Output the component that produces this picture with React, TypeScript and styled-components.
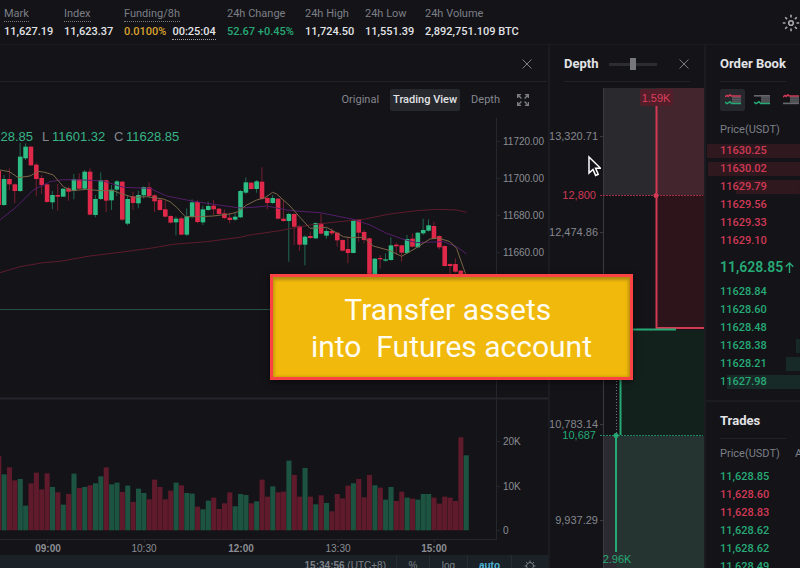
import React from 'react';
import styled, { createGlobalStyle, css } from 'styled-components';

const c = {
  bg: '#131318',
  line: '#222329',
  raised: '#26282d',
  text: '#e2e3e6',
  muted: '#7d7f86',
  green: '#27a976',
  red: '#d03a55',
  candleUp: '#2ebd85',
  candleDown: '#e0294a',
  gold: '#d9a22e',
};

const GlobalStyle = createGlobalStyle`
  * { box-sizing: border-box; }
  html, body { margin: 0; background: ${c.bg}; }
  body { overflow: hidden; font-family: Roboto, "Liberation Sans", sans-serif; font-size: 11px; line-height: 14px; color: ${c.text}; }
  button { font: inherit; color: inherit; border: 0; background: none; padding: 0; cursor: pointer; }
`;

const Page = styled.div`
  position: relative;
  height: 100vh;
  overflow: hidden;
  display: flex;
  flex-direction: column;
`;

const TopBar = styled.header`
  display: flex;
  justify-content: space-between;
  align-items: center;
  height: 45px;
  flex: none;
  padding: 2px 0 0 4px;
  border-bottom: 1px solid #1b1c21;
`;

const Stats = styled.dl`
  display: grid;
  grid-template-columns: 60px 60px 103px 78px 60px 60px auto;
  margin: 0;
`;

const Stat = styled.div`
  display: flex;
  flex-direction: column;
  align-items: flex-start;
  gap: 3px;
  white-space: nowrap;
`;

const StatLabel = styled.dt<{ $hint?: boolean }>`
  color: ${c.muted};
  height: 15px;
  ${(p) => p.$hint && css`border-bottom: 1px dotted #77797f;`}
`;

const StatValue = styled.dd<{ $color?: string }>`
  margin: 0;
  display: flex;
  gap: 6px;
  font-weight: 500;
  color: ${(p) => p.$color ?? c.text};
`;

const Countdown = styled.span`
  color: ${c.text};
  border-bottom: 1px dotted #a0a2a8;
`;

const IconButton = styled.button`
  display: flex;
  align-items: center;
  justify-content: center;
  flex: none;
  color: #7b7d83;
`;

const Main = styled.main`
  display: grid;
  grid-template-columns: minmax(0, 1fr) 156px 96px;
  flex: 1;
  min-height: 0;
`;

const Panel = styled.section`
  min-width: 0;
  display: flex;
  flex-direction: column;
  overflow: hidden;
  & + & { border-left: 2px solid #1b1c21; }
`;

const PanelHead = styled.div<{ $inset?: boolean }>`
  display: flex;
  align-items: center;
  flex: none;
  height: 37px;
  padding-top: 2px;
  margin: ${(p) => (p.$inset ? '0 14px' : '0')};
  border-bottom: 1px solid ${c.line};
`;

const Title = styled.h2`
  margin: 0;
  font-size: 13px;
  line-height: 16px;
  font-weight: 700;
  white-space: nowrap;
`;

const ChartHead = styled(PanelHead)`
  justify-content: flex-end;
  padding-right: 15px;
  margin-right: 1px;
`;

const ViewBar = styled.div`
  display: flex;
  align-items: center;
  justify-content: flex-end;
  flex: none;
  height: 35px;
  gap: 11px;
  padding-right: 19px;
`;

const ViewButton = styled.button<{ $active?: boolean }>`
  height: 22px;
  color: #85878d;
  ${(p) => p.$active && css`
    padding: 0 3px;
    border-radius: 2px;
    background: ${c.raised};
    color: ${c.text};
    font-weight: 500;
  `}
`;

const ExpandButton = styled(IconButton)`
  margin-left: 6px;
`;

const Plot = styled.div`
  display: flex;
  justify-content: flex-end;
  flex: none;
  overflow: hidden;
  svg { flex: none; display: block; font-family: "Liberation Sans", Arial, sans-serif; }
`;

const StatusBar = styled.div`
  display: flex;
  align-items: center;
  justify-content: flex-end;
  flex: none;
  height: 22px;
  background: #1a2127;
  color: #7d8086;
  font-family: "Liberation Sans", Arial, sans-serif;
  font-size: 10px;
`;

const StatusItem = styled.button<{ $width: number; $active?: boolean }>`
  display: flex;
  align-items: center;
  justify-content: center;
  width: ${(p) => p.$width}px;
  height: 22px;
  border-left: 1px solid #262d33;
  white-space: pre;
  font-weight: ${(p) => (p.$active ? 700 : 400)};
  color: ${(p) => (p.$active ? '#4fb5d6' : 'inherit')};
`;

const Clock = styled.time`
  padding-right: 10px;
`;

const Range = styled.input`
  appearance: none;
  width: 48px;
  height: 12px;
  margin: 0 auto 0 11px;
  background: linear-gradient(#2b2d32, #2b2d32) center / 100% 3px no-repeat;
  &::-webkit-slider-thumb {
    appearance: none;
    width: 6px;
    height: 12px;
    background: #76787e;
  }
`;

const CloseDepth = styled(IconButton)`
  margin-right: 1px;
`;

const ModeBar = styled.div`
  display: flex;
  align-items: center;
  gap: 4px;
  flex: none;
  height: 35px;
  padding-left: 14px;
  overflow: hidden;
`;

const ModeButton = styled(IconButton)<{ $active?: boolean }>`
  width: 25px;
  height: 22px;
  border-radius: 2px;
  background: ${(p) => (p.$active ? c.raised : 'transparent')};
`;

const Book = styled.table`
  width: 100%;
  flex: none;
  border-collapse: collapse;
  table-layout: fixed;
`;

const HeadCell = styled.th<{ $first?: boolean; $height: number }>`
  width: ${(p) => (p.$first ? '89px' : 'auto')};
  height: ${(p) => p.$height}px;
  padding: 0 0 0 ${(p) => (p.$first ? 14 : 0)}px;
  text-align: left;
  white-space: nowrap;
  font-weight: 400;
  color: ${c.muted};
`;

const PriceCell = styled.td<{ $up: boolean; $fill?: number }>`
  height: 18px;
  padding: 0 0 0 14px;
  font-weight: 500;
  color: ${(p) => (p.$up ? c.green : c.red)};
  background: linear-gradient(${(p) => (p.$up ? '#182a28, #182a28' : '#30181f, #30181f')}) right center /
    ${(p) => p.$fill ?? 0}% 14px no-repeat;
`;

const LastPrice = styled.td`
  height: 33px;
  padding: 0 0 0 14px;
  font-size: 14px;
  font-weight: 600;
  color: ${c.green};
  white-space: nowrap;
  svg { margin-left: 2px; vertical-align: -1px; }
`;

const TradesPanel = styled.div`
  flex: none;
  margin-top: 9px;
  border-top: 2px solid #1b1c21;
`;

const Callout = styled.aside`
  position: absolute;
  left: 270px;
  top: 274px;
  width: 363px;
  padding: 14px 0 12px;
  border: 3px solid #fc4343;
  background: #f0b90b;
  box-shadow: inset 0 3px 3px #b58c12, inset -2px 0 3px #c59a10, inset 2px 0 3px #d5a50e, 0 2px 6px rgba(0, 0, 0, 0.5);
  color: #fffdf2;
  text-align: center;
  white-space: pre;
  font-size: 30px;
  line-height: 37px;
`;

const Pointer = styled.svg`
  position: absolute;
  left: 587px;
  top: 155px;
`;

type Candle = [number, number, number, number, number];

/* up flag, body top, body bottom, wick top, wick bottom (thirds of a pixel) */
const candles: Candle[] = [
  [0, 153, 255, 153, 255], [1, 177, 255, 165, 258], [0, 177, 193, 145, 210], [0, 193, 213, 190, 250],
  [1, 110, 213, 68, 216], [1, 80, 115, 70, 120], [0, 80, 136, 78, 138], [0, 134, 177, 128, 228],
  [0, 174, 195, 165, 222], [0, 193, 246, 193, 248], [1, 225, 247, 213, 268], [0, 225, 230, 192, 272],
  [1, 206, 230, 206, 230], [0, 205, 215, 200, 242], [1, 177, 213, 162, 238], [0, 178, 206, 160, 208],
  [1, 155, 206, 150, 208], [0, 155, 284, 145, 286], [1, 237, 285, 225, 292], [1, 180, 237, 157, 240],
  [0, 181, 242, 178, 276], [1, 209, 241, 195, 270], [1, 184, 209, 180, 228], [0, 185, 299, 183, 302],
  [1, 237, 311, 225, 316], [0, 229, 249, 215, 270], [1, 225, 250, 212, 265], [1, 201, 226, 199, 236],
  [0, 202, 228, 187, 232], [0, 226, 244, 222, 276], [0, 239, 270, 238, 272], [0, 268, 290, 243, 292],
  [0, 288, 308, 286, 310], [1, 296, 307, 290, 346], [0, 295, 344, 290, 346], [1, 289, 344, 265, 348],
  [1, 247, 291, 238, 295], [0, 246, 306, 240, 310], [1, 268, 307, 257, 315], [1, 258, 270, 245, 272],
  [0, 257, 268, 240, 285], [0, 266, 282, 264, 284], [0, 280, 294, 268, 298], [0, 293, 300, 278, 310],
  [1, 290, 299, 278, 302], [1, 213, 292, 210, 294], [1, 187, 218, 172, 222], [0, 188, 207, 186, 209],
  [1, 184, 207, 180, 218], [0, 185, 237, 142, 240], [0, 234, 249, 230, 268], [1, 234, 249, 225, 252],
  [0, 236, 296, 234, 298], [0, 296, 303, 240, 306], [1, 282, 303, 278, 425], [0, 282, 320, 280, 375],
  [0, 318, 374, 315, 392], [1, 350, 374, 346, 436], [0, 348, 354, 335, 356], [1, 309, 355, 307, 357],
  [0, 309, 341, 282, 343], [1, 333, 347, 325, 356], [0, 333, 340, 325, 345], [0, 338, 361, 335, 380],
  [0, 360, 392, 358, 394], [0, 387, 399, 350, 430], [1, 300, 399, 298, 400], [0, 299, 338, 297, 365],
  [0, 336, 360, 330, 370], [0, 355, 480, 353, 482], [1, 416, 480, 414, 482], [0, 414, 418, 405, 446],
  [1, 418, 422, 400, 425], [1, 376, 420, 352, 422], [0, 374, 379, 368, 405], [0, 376, 398, 374, 425],
  [1, 357, 399, 345, 402], [0, 356, 380, 340, 382], [1, 338, 382, 336, 384], [1, 330, 340, 296, 345],
  [1, 316, 332, 298, 335], [0, 318, 356, 305, 358], [0, 348, 382, 346, 388], [0, 378, 438, 376, 440],
  [0, 432, 438, 430, 462], [0, 432, 455, 415, 458], [0, 452, 480, 450, 482],
];

/* bar heights in thirds of a pixel; negative values are down bars */
const volumes = [
  -223, 168, -189, -150, 154, 74, -141, -173, -123, -171, 130, -114, 77, -109, 170, -127, 130, -135, 141, 162,
  -189, 138, 143, -115, 134, -85, 125, 112, -93, -152, -130, -93, -119, 143, -135, 112, 110, -71, 63, 89,
  -98, -64, -81, -114, 72, 109, 106, -81, 87, -152, -101, 132, -114, -116, 209, -166, -101, 187, -101, 78,
  -105, 82, -57, -109, -96, -134, 141, -154, -99, -166, 135, -128, 92, 130, -88, -116, 98, -95, 92, 109,
  109, -98, -80, -101, -98, -88, -279, 225,
];

const shortAverage =
  '0,150 28,155 55,173 90,168 115,154 135,157 160,165 190,200 215,212 260,208 300,212 340,212 360,220 400,232 440,230 490,237 510,245 530,262 556,290 600,290 640,288 690,282 712,276 740,255 770,240 795,233 818,217 830,222 870,258 900,292 930,325 980,322 1030,350 1050,353 1090,352 1120,378 1170,392 1205,409 1250,383 1290,357 1315,354 1350,365 1370,385 1382,420 1397,462 1402,480';
const midAverage =
  '0,300 50,260 100,210 150,185 190,179 250,180 310,183 370,202 450,205 500,228 560,240 620,250 720,264 760,262 800,258 860,270 900,274 960,278 1020,290 1060,298 1110,315 1160,340 1210,358 1250,368 1300,366 1330,365 1370,380 1400,402';
const longAverage =
  '0,458 60,440 130,428 180,424 270,408 360,397 450,385 520,373 620,365 720,352 750,345 840,332 890,322 930,315 990,308 1090,298 1170,282 1250,272 1310,268 1370,270 1400,277';

const barX = (i: number) => (12 + 16.12 * (i - 1)) / 3;

function PriceChart() {
  return (
    <svg width="548" height="438" viewBox="0 117 548 438" fontSize="10" fill="#8b8d93" aria-label="Price and volume chart">
      <g stroke="#26272d">
        <path d="M0 398.5H548" strokeWidth="2" />
        <path d="M496.5 118V539M0 539.5H497M47.5 539v3M144.5 539v3M241.5 539v3M338.5 539v3M434.5 539v3" />
        <path d="M497 141.5h3M497 178.5h3M497 215.5h3M497 252.5h3M497 441.5h3M497 486.5h3M497 530.5h3" />
      </g>
      <path d="M0 309.5H497" stroke="#285344" />
      {candles.map(([up, top, bottom, high, low], i) => (
        <g key={i} fill={up ? c.candleUp : c.candleDown}>
          <rect x={barX(i) - 0.5} y={120 + high / 3} width="1" height={(low - high) / 3} opacity="0.5" />
          <rect x={barX(i) - 2.2} y={120 + top / 3} width="4.6" height={(bottom - top) / 3} />
        </g>
      ))}
      <g transform="translate(0 120) scale(0.3333)" fill="none" strokeWidth="3">
        <polyline points={longAverage} stroke="#5e1b2b" />
        <polyline points={midAverage} stroke="#551d68" />
        <polyline points={shortAverage} stroke="#7b6546" />
      </g>
      {volumes.map((v, i) => (
        <rect
          key={i}
          x={barX(i) - 2.4}
          y={530.3 - Math.abs(v) / 3}
          width="5.1"
          height={Math.abs(v) / 3}
          fill={v > 0 ? '#1c5341' : '#5f1a2b'}
        />
      ))}
      <g fontSize="13" fill="#38b487">
        <text x="33" y="141" textAnchor="end">28.85</text>
        <text x="42" y="141" fill="#85878d">L</text>
        <text x="52" y="141">11601.32</text>
        <text x="114" y="141" fill="#85878d">C</text>
        <text x="126" y="141">11628.85</text>
      </g>
      <text x="503" y="145">11720.00</text>
      <text x="503" y="182">11700.00</text>
      <text x="503" y="219">11680.00</text>
      <text x="503" y="256">11660.00</text>
      <text x="503" y="445">20K</text>
      <text x="503" y="490">10K</text>
      <text x="503" y="534">0</text>
      <g textAnchor="middle">
        <text x="48" y="552" fontWeight="700">09:00</text>
        <text x="144" y="552">10:30</text>
        <text x="241" y="552" fontWeight="700">12:00</text>
        <text x="338" y="552">13:30</text>
        <text x="434" y="552" fontWeight="700">15:00</text>
      </g>
    </svg>
  );
}

function DepthChart() {
  return (
    <svg width="155" height="490" viewBox="549 82 155 490" fontSize="11" fill="#85878d" aria-label="Depth chart">
      <rect x="603" y="88" width="53" height="107" fill="#29292e" />
      <rect x="656" y="88" width="48" height="107" fill="#42252d" />
      <rect x="656" y="195" width="48" height="133" fill="#2d131a" />
      <rect x="620" y="330" width="84" height="105" fill="#13211d" />
      <rect x="603" y="436" width="13" height="136" fill="#2b2a30" />
      <rect x="616" y="436" width="88" height="136" fill="#263431" />
      <path d="M603.5 88V572M600 136.5h4M600 232.5h4M600 424.5h4M600 520.5h4" stroke="#3a3b41" />
      <path d="M600 195.5h103" stroke="#a03047" strokeDasharray="2 1" />
      <path d="M600 435.5h103" stroke="#1f8a62" strokeDasharray="2 1" />
      <path d="M616.5 330V434" stroke="#74767b" strokeDasharray="1 2" />
      <path d="M656.5 104V328H704" stroke={c.red} strokeWidth="2" fill="none" />
      <path d="M549 329.5H676" stroke={c.green} strokeWidth="2" />
      <path d="M620.5 330V435M616 435V552" stroke={c.green} strokeWidth="2" />
      <circle cx="656" cy="195.5" r="2.5" fill={c.red} />
      <circle cx="616" cy="435.5" r="2.5" fill={c.green} />
      <rect x="640" y="89" width="33" height="17" rx="2" fill="#521e2a" />
      <text x="656" y="102" fill="#dc3f5c" textAnchor="middle">1.59K</text>
      <text x="617" y="563" fill={c.green} textAnchor="middle">2.96K</text>
      <g textAnchor="end">
        <text x="598" y="140">13,320.71</text>
        <text x="596" y="199" fill={c.red}>12,800</text>
        <text x="598" y="236">12,474.86</text>
        <text x="598" y="428">10,783.14</text>
        <text x="596" y="439" fill={c.green}>10,687</text>
        <text x="598" y="524">9,937.29</text>
      </g>
    </svg>
  );
}

const CloseIcon = () => (
  <svg width="10" height="10" viewBox="0 0 10 10" fill="none" stroke="currentColor">
    <path d="M.5.5l9 9M9.5.5l-9 9" />
  </svg>
);

const ExpandIcon = () => (
  <svg width="12" height="12" viewBox="0 0 12 12" fill="none" stroke="currentColor" strokeWidth="1.4">
    <path d="M.6 4V.6H4M.6.6l3.8 3.8M8 .6h3.4V4M11.4.6L7.6 4.4M.6 8v3.4H4M.6 11.4l3.8-3.8M8 11.4h3.4V8M11.4 11.4L7.6 7.6" />
  </svg>
);

const SunIcon = () => (
  <svg width="18" height="18" viewBox="0 0 18 18" fill="none" stroke="#a9aaae" strokeWidth="1.6">
    <circle cx="9" cy="9" r="2.3" />
    <path d="M9 .8v2.7M9 14.5v2.7M.8 9h2.7M14.5 9h2.7M3.2 3.2l1.9 1.9M12.9 12.9l1.9 1.9M14.8 3.2l-1.9 1.9M5.1 12.9l-1.9 1.9" />
  </svg>
);

const GearIcon = () => (
  <svg width="12" height="12" viewBox="0 0 12 12" fill="none" stroke="currentColor">
    <circle cx="6" cy="6" r="3.5" />
    <path d="M6 .5v2M6 9.5v2M.5 6h2M9.5 6h2M2.1 2.1l1.4 1.4M8.5 8.5l1.4 1.4M9.9 2.1L8.5 3.5M3.5 8.5L2.1 9.9" />
  </svg>
);

function BookIcon({ asks, bids }: { asks?: boolean; bids?: boolean }) {
  return (
    <svg width="16" height="11" viewBox="0 0 16 11" fill="none">
      <path d="M7 2.4h9v6.4H7z" fill="#55575c" />
      <path d="M7 4.5h9M7 6.7h9" stroke="#3b3d42" strokeWidth=".6" />
      {asks ? (
        <path d="M0 3l2-1.6 1.2 1L5 .8 6.2 2H16" stroke={c.red} strokeWidth="1.5" />
      ) : (
        <path d="M0 1.8h16" stroke="#66686d" strokeWidth="1.6" />
      )}
      {bids ? (
        <path d="M0 8l2 1.6L5 7.8l1.6 1.8H16" stroke={c.green} strokeWidth="1.5" />
      ) : (
        <path d="M0 9.4h16" stroke="#66686d" strokeWidth="1.6" />
      )}
    </svg>
  );
}

const asks: [string, number][] = [
  ['11630.25', 99], ['11630.02', 98], ['11629.79', 68], ['11629.56', 0], ['11629.33', 0], ['11629.10', 0],
];
const bids: [string, number][] = [
  ['11628.84', 0], ['11628.60', 0], ['11628.48', 0], ['11628.38', 4], ['11628.21', 15], ['11627.98', 78],
];
const trades: [string, boolean][] = [
  ['11,628.85', true], ['11,628.60', false], ['11,628.83', false], ['11,628.62', true], ['11,628.62', true], ['11,628.49', true],
];

export default function App() {
  return (
    <Page>
      <GlobalStyle />
      <TopBar>
        <Stats>
          <Stat><StatLabel $hint>Mark</StatLabel><StatValue>11,627.19</StatValue></Stat>
          <Stat><StatLabel $hint>Index</StatLabel><StatValue>11,623.37</StatValue></Stat>
          <Stat>
            <StatLabel $hint>Funding/8h</StatLabel>
            <StatValue $color={c.gold}>0.0100% <Countdown>00:25:04</Countdown></StatValue>
          </Stat>
          <Stat><StatLabel>24h Change</StatLabel><StatValue $color={c.green}>52.67 +0.45%</StatValue></Stat>
          <Stat><StatLabel>24h High</StatLabel><StatValue>11,724.50</StatValue></Stat>
          <Stat><StatLabel>24h Low</StatLabel><StatValue>11,551.39</StatValue></Stat>
          <Stat><StatLabel>24h Volume</StatLabel><StatValue>2,892,751.109 BTC</StatValue></Stat>
        </Stats>
        <IconButton aria-label="Theme"><SunIcon /></IconButton>
      </TopBar>
      <Main>
        <Panel>
          <ChartHead><IconButton aria-label="Close chart"><CloseIcon /></IconButton></ChartHead>
          <ViewBar>
            <ViewButton>Original</ViewButton>
            <ViewButton $active>Trading View</ViewButton>
            <ViewButton>Depth</ViewButton>
            <ExpandButton aria-label="Full screen"><ExpandIcon /></ExpandButton>
          </ViewBar>
          <Plot><PriceChart /></Plot>
          <StatusBar>
            <Clock><b>15:34:56</b> (UTC+8)</Clock>
            <StatusItem $width={33}>%</StatusItem>
            <StatusItem $width={38}>log</StatusItem>
            <StatusItem $width={44} $active>auto</StatusItem>
            <StatusItem $width={37} aria-label="Chart settings"><GearIcon /></StatusItem>
          </StatusBar>
        </Panel>
        <Panel>
          <PanelHead $inset>
            <Title>Depth</Title>
            <Range type="range" min={0} max={100} defaultValue={48} aria-label="Depth range" />
            <CloseDepth aria-label="Close depth"><CloseIcon /></CloseDepth>
          </PanelHead>
          <Plot><DepthChart /></Plot>
        </Panel>
        <Panel>
          <PanelHead $inset><Title>Order Book</Title></PanelHead>
          <ModeBar>
            <ModeButton $active aria-label="Bids and asks"><BookIcon asks bids /></ModeButton>
            <ModeButton aria-label="Bids only"><BookIcon bids /></ModeButton>
            <ModeButton aria-label="Asks only"><BookIcon asks /></ModeButton>
          </ModeBar>
          <Book>
            <thead>
              <tr><HeadCell $first $height={25} colSpan={2}>Price(USDT)</HeadCell></tr>
            </thead>
            <tbody>
              {asks.map(([price, fill]) => (
                <tr key={price}><PriceCell colSpan={2} $up={false} $fill={fill}>{price}</PriceCell></tr>
              ))}
              <tr>
                <LastPrice colSpan={2}>
                  11,628.85
                  <svg width="9" height="11" viewBox="0 0 9 11" fill="none" stroke="currentColor" strokeWidth="1.4">
                    <path d="M4.5 11V1M.7 4.8l3.8-3.8 3.8 3.8" />
                  </svg>
                </LastPrice>
              </tr>
              {bids.map(([price, fill]) => (
                <tr key={price}><PriceCell colSpan={2} $up $fill={fill}>{price}</PriceCell></tr>
              ))}
            </tbody>
          </Book>
          <TradesPanel>
            <PanelHead $inset><Title>Trades</Title></PanelHead>
            <Book>
              <thead>
                <tr>
                  <HeadCell $first $height={29}>Price(USDT)</HeadCell>
                  <HeadCell $height={29}>Amount</HeadCell>
                </tr>
              </thead>
              <tbody>
                {trades.map(([price, up], i) => (
                  <tr key={i}><PriceCell colSpan={2} $up={up}>{price}</PriceCell></tr>
                ))}
              </tbody>
            </Book>
          </TradesPanel>
        </Panel>
      </Main>
      <Callout>{'Transfer assets \ninto  Futures account'}</Callout>
      <Pointer width="14" height="23" viewBox="0 0 14 23" aria-hidden="true">
        <path d="M2 2v16l4-3.6 2.6 6 2.6-1.1-2.6-6h5z" fill="#141419" stroke="#fff" strokeWidth="1.5" />
      </Pointer>
    </Page>
  );
}
